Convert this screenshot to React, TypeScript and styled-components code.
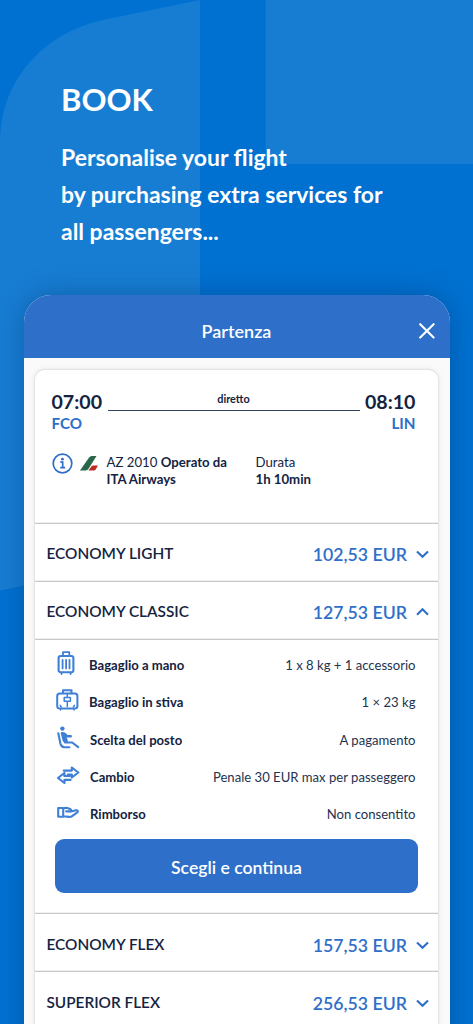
import React from 'react';
import styled, { createGlobalStyle } from 'styled-components';

const blue = '#2e6fc9';
const navy = '#14233f';

const GlobalStyle = createGlobalStyle`
  * { box-sizing: border-box; }
  html, body { margin: 0; padding: 0; }
  body {
    background: #0071d1;
    font-family: Lato, "Liberation Sans", sans-serif;
    color: ${navy};
    overflow: hidden;
  }
  h1, p { margin: 0; }
`;

const Page = styled.main`
  position: relative;
  width: 473px;
  height: 1024px;
  overflow: hidden;
  background: #0071d1;
  display: flex;
  flex-direction: column;
`;

const Backdrop = styled.svg`
  position: absolute;
  inset: 0;
`;

const Hero = styled.header`
  position: relative;
  height: 295px;
  flex: none;
  padding: 79px 0 0 61px;
  color: #fff;
`;

const HeroTitle = styled.h1`
  font-size: 31px;
  line-height: 40px;
  font-weight: 700;
`;

const HeroText = styled.p`
  margin-top: 20px;
  font-size: 22.95px;
  line-height: 37px;
  font-weight: 700;
  white-space: nowrap;
`;

const Sheet = styled.section`
  position: relative;
  width: 426px;
  margin-left: 23.5px;
  flex: 1;
  background: #fafafb;
  border-radius: 27px 27px 0 0;
  box-shadow: 0 0 28px rgba(0, 40, 90, 0.34);
`;

const SheetHeader = styled.div`
  height: 63.3px;
  display: flex;
  align-items: center;
  justify-content: center;
  padding-top: 9px;
  border-radius: 27px 27px 0 0;
  background: ${blue};
  color: #fff;
  font-size: 18px;
  font-weight: 600;
`;

const CloseButton = styled.button`
  position: absolute;
  top: 28px;
  right: 15px;
  width: 16px;
  height: 16px;
  padding: 0;
  border: 0;
  background: none;
  svg { display: block; }
`;

const Card = styled.article`
  margin: 11.7px 11.5px 0 11.5px;
  height: 720px;
  background: #fff;
  border-radius: 9px;
  box-shadow: 0 0 2px rgba(0, 0, 0, 0.22), 0 0 7px rgba(0, 0, 0, 0.08);
`;

const Summary = styled.div`
  height: 153px;
  padding: 20px 22.5px 0 16.5px;
`;

const Route = styled.div`
  display: flex;
  align-items: flex-start;
`;

const Stop = styled.div<{ $end?: boolean }>`
  width: 51px;
  flex: none;
  text-align: ${(p) => (p.$end ? 'right' : 'left')};
  color: ${blue};
  font-size: 15.2px;
  line-height: 20px;
  font-weight: 700;
`;

const Time = styled.div`
  font-size: 19.6px;
  line-height: 23px;
  font-weight: 700;
  color: ${navy};
`;

const Leg = styled.div`
  flex: 1;
  height: 21px;
  margin: 0 5px;
  border-bottom: 1.4px solid #31435f;
  text-align: center;
  font-size: 10.9px;
  line-height: 18px;
  font-weight: 700;
`;

const Operator = styled.div`
  display: flex;
  margin-top: 20px;
  font-size: 13.2px;
  line-height: 17px;
  white-space: nowrap;
  svg { flex: none; }
  strong { font-weight: 700; }
`;

const Carrier = styled.div`
  width: 149px;
  margin-left: 9px;
`;

const OperatorText = styled.div`
  display: flex;
  padding-top: 1px;
`;

const FareRow = styled.div`
  height: 58px;
  border-top: 1px solid #c6c7c9;
  box-shadow: 0 -1px 0 rgba(0, 0, 0, 0.06);
  display: flex;
  align-items: center;
  padding: 2px 9px 0 11.5px;
`;

const FareName = styled.span`
  flex: 1;
  font-size: 15.35px;
  font-weight: 600;
`;

const Price = styled.span`
  margin: 3px 9px 0 0;
  color: ${blue};
  font-size: 17.7px;
  font-weight: 600;
`;

const Details = styled.div`
  height: 274.5px;
  border-top: 1px solid #c6c7c9;
  box-shadow: 0 -1px 0 rgba(0, 0, 0, 0.06);
  padding: 6.6px 20px 0;
`;

const Feature = styled.div`
  height: 37.2px;
  display: flex;
  align-items: center;
  padding-right: 2.5px;
  font-size: 13.1px;
`;

const FeatureIcon = styled.svg`
  width: 26px;
  height: 26px;
  flex: none;
  margin-bottom: 4px;
  fill: none;
  stroke: #3f80d6;
  stroke-width: 1.8;
  stroke-linecap: round;
  stroke-linejoin: round;
`;

const FeatureName = styled.span<{ $indent: number }>`
  flex: 1;
  margin-left: ${(p) => p.$indent}px;
  font-weight: 700;
`;

const FeatureValue = styled.span`
  color: #24334f;
`;

const Choose = styled.button`
  display: block;
  width: 363px;
  height: 54.5px;
  margin-top: 6.3px;
  padding: 2px 0 0;
  border: 0;
  border-radius: 9px;
  background: ${blue};
  color: #fff;
  font-family: inherit;
  font-size: 17.6px;
  font-weight: 600;
`;

const Chevron = ({ up = false }: { up?: boolean }) => (
  <svg width="13" height="10" viewBox="0 0 13 10" fill="none" stroke={blue} strokeWidth="2.1">
    <path d={up ? 'M1 8.7 6.5 3.2 12 8.7' : 'M1 3.4 6.5 8.8 12 3.4'} />
  </svg>
);

const Fare = ({ name, price, open }: { name: string; price: string; open?: boolean }) => (
  <FareRow>
    <FareName>{name}</FareName>
    <Price>{price}</Price>
    <Chevron up={open} />
  </FareRow>
);

const features = [
  {
    name: 'Bagaglio a mano', value: '1 x 8 kg + 1 accessorio', indent: 8,
    icon: <><rect x="3.6" y="6" width="14.8" height="16.2" rx="2" strokeWidth="2.1" /><path d="M8 5.8V2.1h6.3v3.7M7.6 9.8v8.6M11.1 9.8v8.6M14.5 9.8v8.6M6.5 22.8v1.3M15.6 22.8v1.3" /></>,
  },
  {
    name: 'Bagaglio in stiva', value: '1 × 23 kg', indent: 8,
    icon: <><rect x="2.2" y="6.6" width="20.2" height="15" rx="2.5" strokeWidth="2" /><path d="M8 6.2V3.3h8.5v2.9" strokeWidth="2" /><path d="M12.3 7v3.3M9.2 10.5h6.2v3.8H9.2zM12.3 14.5v5M5.5 22.2v.9M19 22.2v.9M5.2 18.4l1 1.6M19.4 18.4l-1 1.6" strokeWidth="1.5" /></>,
  },
  {
    name: 'Scelta del posto', value: 'A pagamento', indent: 9,
    icon: <><circle cx="7.4" cy="3.6" r="2.2" fill="#3f80d6" stroke="none" /><path d="M7 8.3q1.9-.6 3.2.9l1.9 2.1h3.7" strokeWidth="2.4" /><path d="M6.6 8.3l3.4 1.5 2 6.3H8.7z" fill="#3f80d6" /><path d="M3.3 8.3 5.4 18.5q.9 3.7 4 3.7h5M10 17.5h7.2l6 4.7" strokeWidth="2.1" /></>,
  },
  {
    name: 'Cambio', value: 'Penale 30 EUR max per passeggero', indent: 9,
    icon: <path d="M8.7 8.6h8.1V5.5l6.5 5-6.5 5v-3h-3.9M15.5 17.9H9.5V21L3 16l6.4-5V14h5.4" strokeWidth="2.2" />,
  },
  {
    name: 'Rimborso', value: 'Non consentito', indent: 9,
    icon: <path d="M3.2 9h5v8.8h-5zM8.2 9.6q2.2-1.2 4.2-.5l3.2 1.2q1.2 1.1-.4 2.1h-4M15.8 12.6l5.3-1.4q2.5-.1 1.5 1.9l-5.5 4q-1.4 1-3.1.8l-5.8-.6" strokeWidth="2.1" />,
  },
];

export default function App() {
  return (
    <>
      <GlobalStyle />
      <Page>
        <Backdrop width="473" height="1024" viewBox="0 0 473 1024" fill="#177dd3">
          <path d="M200 0 105 19.5C45 32 0 79 0 142V590.5L200 550Z" />
          <path d="M265.5 0H473V164H265.5Z" />
        </Backdrop>
        <Hero>
          <HeroTitle>BOOK</HeroTitle>
          <HeroText>
            Personalise your flight
            <br />
            by purchasing extra services for
            <br />
            all passengers...
          </HeroText>
        </Hero>
        <Sheet>
          <SheetHeader>Partenza</SheetHeader>
          <CloseButton aria-label="Chiudi">
            <svg width="16" height="16" viewBox="0 0 16 16" stroke="#fff" strokeWidth="2.1" strokeLinecap="round">
              <path d="M1.2 1.2 14.6 14.6M14.6 1.2 1.2 14.6" />
            </svg>
          </CloseButton>
          <Card>
            <Summary>
              <Route>
                <Stop><Time>07:00</Time>FCO</Stop>
                <Leg>diretto</Leg>
                <Stop $end><Time>08:10</Time>LIN</Stop>
              </Route>
              <Operator>
                <svg width="21" height="21" viewBox="0 0 21 21" fill="none" stroke={blue} strokeWidth="1.7">
                  <circle cx="10.5" cy="10.5" r="9.3" />
                  <path d="M8.3 9.2h2.4v5.3M8.2 14.7h4.9" />
                  <circle cx="10.4" cy="6.2" r="1.4" fill={blue} stroke="none" />
                </svg>
                <svg width="25" height="21" viewBox="0 0 25 21">
                  <path d="M23.5 3h-4.8q-1.5 0-2.6 1.5L7 17.4h5.8q1.6 0 2.6-1.4z" fill="#286747" />
                  <path d="M25 12.6h-5q-1 0-1.6.8l-3 4h5.6q1.2 0 1.7-1z" fill="#bd2b25" />
                </svg>
                <OperatorText>
                  <Carrier>AZ 2010 <strong>Operato da<br />ITA Airways</strong></Carrier>
                  <div>Durata<br /><strong>1h 10min</strong></div>
                </OperatorText>
              </Operator>
            </Summary>
            <Fare name="ECONOMY LIGHT" price="102,53 EUR" />
            <Fare name="ECONOMY CLASSIC" price="127,53 EUR" open />
            <Details>
              {features.map((f) => (
                <Feature key={f.name}>
                  <FeatureIcon viewBox="0 0 26 26">{f.icon}</FeatureIcon>
                  <FeatureName $indent={f.indent}>{f.name}</FeatureName>
                  <FeatureValue>{f.value}</FeatureValue>
                </Feature>
              ))}
              <Choose>Scegli e continua</Choose>
            </Details>
            <Fare name="ECONOMY FLEX" price="157,53 EUR" />
            <Fare name="SUPERIOR FLEX" price="256,53 EUR" />
          </Card>
        </Sheet>
      </Page>
    </>
  );
}
